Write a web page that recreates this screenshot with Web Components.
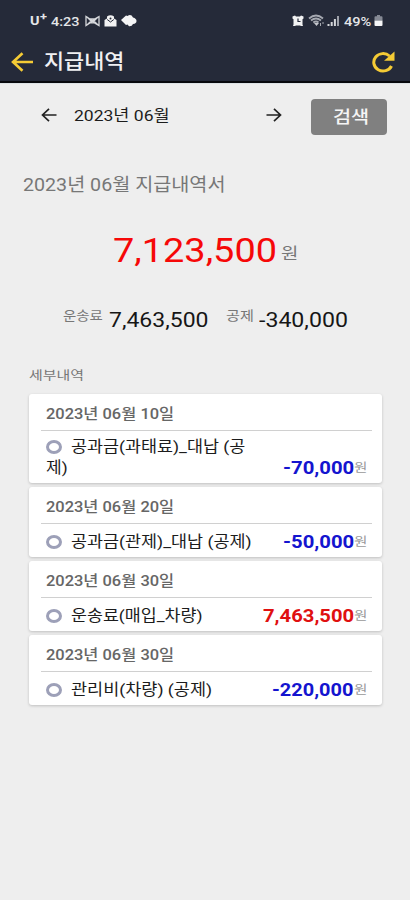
<!DOCTYPE html>
<html lang="ko">
<head>
<meta charset="utf-8">
<title>지급내역</title>
<style>
    body {
        margin: 0;
        background: #eee;
        font-family: Roboto, "Noto Sans CJK KR", sans-serif;
    }
</style>
</head>
<body>
<payment-page></payment-page>
<script>
// Text stretched horizontally to the width given in its attribute.
class WideText extends HTMLElement {
    constructor() {
        super();
        this.attachShadow({mode : "open"});
    }

    connectedCallback() {
        this.shadowRoot.innerHTML = `
            <style>
                :host { display: block; flex: none; white-space: nowrap; }
                span { display: inline-block; transform-origin: 0 50%; vertical-align: top; }
            </style>
            <span><slot></slot></span>
        `;
        this.style.width = this.getAttribute("width") + "px";
        const span = this.shadowRoot.querySelector("span");
        span.style.transform = `scaleX(${this.getAttribute("width") / span.offsetWidth})`;
    }
}

class StatusBar extends HTMLElement {
    constructor() {
        super();
        this.attachShadow({mode : "open"});
    }

    connectedCallback() {
        this.shadowRoot.innerHTML = `
            <style>
                :host {
                    display: flex;
                    align-items: center;
                    justify-content: space-between;
                    height: 41px;
                    padding: 0 27px 0 30px;
                    box-sizing: border-box;
                    color: #e4e5e8;
                    font-size: 13.5px;
                    font-weight: 500;
                    line-height: 20px;
                }
                div { display: flex; align-items: center; }
                svg { display: block; flex: none; }
                .carrier { font-weight: 700; font-size: 13px; }
                .plus { font-weight: 700; font-size: 11px; margin-top: -7px; }
            </style>
            <div>
                <wide-text class="carrier" width="10">U</wide-text>
                <wide-text class="plus" width="7">+</wide-text>
                <wide-text width="29" style="margin-left:4px">4:23</wide-text>
                <svg width="15" height="12" viewBox="0 0 15 12" style="margin-left:5px" fill="none" stroke="#d6d8dc" stroke-width="1.3"><path d="M1 1.500v9l4-2.600h4.500l4.500 2.600v-9L9.500 4H5ZM2 2l4 4-4 4M13 2 9 6l4 4M5.500 4l4 4M9.500 4l-4 4"/></svg>
                <svg width="13" height="12" viewBox="0 0 13 12" style="margin-left:4px"><path d="M.5 5 3 3.500V1.500Q6.500-.8 10 1.500v2L12.500 5v6.500H.5Z" fill="#f2f2f3"/><path d="M3.200 4.500 6.500 7l3.300-2.500" fill="none" stroke="#252a39" stroke-width="1"/><circle cx="6.500" cy="3.500" r="1" fill="#252a39"/></svg>
                <svg width="16" height="13" viewBox="0 0 16 13" style="margin-left:4px"><path d="M0 6 5 1.500 6.500 2Q10-.5 12 3.500q3.500 1 3.500 3.500 0 2.500-3.500 3-1 2.500-4 2.200L6.500 10.500 5 11Z" fill="#f4f4f5"/></svg>
            </div>
            <div>
                <svg width="12" height="12" viewBox="0 0 12 12"><path d="M.5 1.500 3 .5l1 1h4l1-1 2.500 1v2l-1 .800v5.200L11 11H9l-1-.5H4L3 11H1l.5-1.500V4.300L.5 3.500Z" fill="#f2f2f3"/><path d="M6 3.500v3h2.500" fill="none" stroke="#252a39" stroke-width="1.200"/></svg>
                <svg width="17" height="13" viewBox="0 0 17 13" style="margin-left:4px" fill="none"><path d="M1 4.500Q8-1.500 15 4.500M3 6.500q5-4 10 0M5.300 8.500Q8 6.500 10.500 8.500" stroke="#a6a9b1" stroke-width="1.800"/><path d="M6 9 8.500 12l2.500-3Z" fill="#c6c8cd"/><path d="M12.500 9v3M15 8v2" stroke="#a6a9b1"/></svg>
                <svg width="13" height="12" viewBox="0 0 13 12" style="margin-left:2px" stroke-width="2"><path d="M1.500 11V9M4.700 11V7M7.900 11V4" stroke="#d3d5d9"/><path d="M11 11V1" stroke="#9da0a9"/></svg>
                <wide-text width="27" style="margin-left:4px">49%</wide-text>
                <svg width="9" height="11" viewBox="0 0 9 11" style="margin-left:3px"><path d="M3 0h3v1.200h1.500q1 0 1 1v3.300H.5V2.200q0-1 1-1H3Z" fill="#858994"/><path d="M.5 5.500h8V10q0 1-1 1h-6q-1 0-1-1Z" fill="#f5f5f6"/></svg>
            </div>
        `;
    }
}

class TitleBar extends HTMLElement {
    constructor() {
        super();
        this.attachShadow({mode : "open"});
    }

    connectedCallback() {
        this.shadowRoot.innerHTML = `
            <style>
                :host {
                    display: flex;
                    align-items: center;
                    height: 41px;
                    padding: 0 15px 0 11px;
                    color: #f0f0f2;
                    font-size: 20.5px;
                    font-weight: 500;
                    line-height: 40px;
                }
                wide-text { margin-left: 10px; }
                .refresh { margin-left: auto; }
            </style>
            <svg width="23" height="20" viewBox="0 0 23 20" fill="none" stroke="#f5cb35" stroke-width="2.600"><path d="M22 10H2M11.500 1.200 2 10l9.500 8.800"/></svg>
            <wide-text width="80"><slot></slot></wide-text>
            <svg class="refresh" width="24" height="22" viewBox="0 0 24 22"><path d="M20.500 15A9.300 8.700 0 1 1 18.500 5" fill="none" stroke="#f5cb35" stroke-width="3"/><path d="M23.500.5v9.200H13Z" fill="#f5cb35"/></svg>
        `;
    }
}

class MonthPicker extends HTMLElement {
    constructor() {
        super();
        this.attachShadow({mode : "open"});
    }

    connectedCallback() {
        this.shadowRoot.innerHTML = `
            <style>
                :host {
                    display: flex;
                    align-items: center;
                    height: 36px;
                    padding: 15px 23px 0 41px;
                    color: #1c1c1c;
                    font-size: 15.5px;
                    line-height: 32px;
                }
                svg { fill: none; stroke: #222; stroke-width: 1.700; margin-bottom: 5px; }
                .month { margin: 0 96px 3px 17px; }
                button {
                    display: flex;
                    align-items: center;
                    justify-content: center;
                    width: 76px;
                    height: 36px;
                    margin-left: auto;
                    padding: 0;
                    border: 0;
                    border-radius: 4px;
                    background: #808080;
                    color: #f5f5f5;
                    font: 500 17.5px/36px Roboto, "Noto Sans CJK KR", sans-serif;
                }
            </style>
            <svg width="16" height="14" viewBox="0 0 16 14"><path d="M15.500 7H1.500M8 .8 1.500 7 8 13.200"/></svg>
            <wide-text class="month" width="96"><slot></slot></wide-text>
            <svg width="16" height="14" viewBox="0 0 16 14"><path d="M.5 7h14M8 .8 14.500 7 8 13.200"/></svg>
            <button><wide-text width="36">검색</wide-text></button>
        `;
    }
}

class PaySummary extends HTMLElement {
    constructor() {
        super();
        this.attachShadow({mode : "open"});
    }

    connectedCallback() {
        this.shadowRoot.innerHTML = `
            <style>
                :host { display: block; color: #777; }
                .heading { margin: 35px 0 0 23px; font-size: 18px; line-height: 30px; }
                .total { display: flex; margin: 28px 0 0 113px; height: 44px; }
                .total .value { color: #f60808; font-size: 33.500px; line-height: 45px; }
                .total .won { margin-left: 4px; font-size: 15.500px; line-height: 53px; }
                .parts { display: flex; margin: 33px 0 0 63px; height: 30px; }
                .parts .label { font-size: 13px; line-height: 22px; }
                .parts .value { color: #161616; font-size: 20px; line-height: 31px; margin-left: 6px; }
                .details { margin: 30px 0 0 29px; font-size: 12.500px; line-height: 21px; }
            </style>
            <wide-text class="heading" width="203">2023년 06월 지급내역서</wide-text>
            <div class="total">
                <wide-text class="value" width="164">7,123,500</wide-text>
                <wide-text class="won" width="17">원</wide-text>
            </div>
            <div class="parts">
                <wide-text class="label" width="40">운송료</wide-text>
                <wide-text class="value" width="100">7,463,500</wide-text>
                <wide-text class="label" width="28" style="margin-left:17px">공제</wide-text>
                <wide-text class="value" width="89" style="margin-left:5px">-340,000</wide-text>
            </div>
            <wide-text class="details" width="55">세부내역</wide-text>
        `;
    }
}

class PayCard extends HTMLElement {
    constructor() {
        super();
        this.attachShadow({mode : "open"});
    }

    connectedCallback() {
        const color = this.getAttribute("amount").startsWith("-") ? "#1414cf" : "#e01010";

        this.shadowRoot.innerHTML = `
            <style>
                :host {
                    display: block;
                    box-sizing: border-box;
                    min-height: 70px;
                    padding: 5px 10px 4px 12px;
                    border-radius: 3px;
                    background: #fff;
                    box-shadow: 0 1px 3px #0003;
                }
                .date {
                    padding: 0 0 0 5px;
                    height: 31px;
                    border-bottom: 1px solid #d0d0d0;
                    color: #666;
                    font-size: 14.500px;
                    font-weight: 500;
                    line-height: 32px;
                }
                .row { display: flex; align-items: flex-end; padding: 6px 4px 0 5px; }
                .name { color: #1c1c1c; font-size: 15.500px; line-height: 21px; }
                .line { display: flex; align-items: center; }
                i {
                    box-sizing: border-box;
                    width: 16px;
                    height: 14px;
                    margin: 0 9px 2px 0;
                    border: 3px solid #9da0b8;
                    border-radius: 50%;
                }
                .value { margin-left: auto; color: ${color}; font-size: 18px; font-weight: 700; line-height: 22px; }
                .won { color: #999; font-size: 12.500px; line-height: 23px; }
            </style>
            <div class="date"><wide-text width="128">${this.getAttribute("date")}</wide-text></div>
            <div class="row">
                <div class="name">
                    <div class="line"><i></i><slot></slot></div>
                    <slot name="more"></slot>
                </div>
                <wide-text class="value" width="${this.getAttribute("amount-width")}">${this.getAttribute("amount")}</wide-text>
                <wide-text class="won" width="14">원</wide-text>
            </div>
        `;
    }
}

class PaymentPage extends HTMLElement {
    constructor() {
        super();
        this.attachShadow({mode : "open"});
    }

    connectedCallback() {
        this.shadowRoot.innerHTML = `
            <style>
                :host { display: block; height: 900px; overflow: hidden; }
                header { height: 83px; box-sizing: border-box; background: #252a39; border-bottom: 2px solid #08090d; }
                main { border-top: 1px solid #dde2e4; }
                .list { display: flex; flex-direction: column; gap: 4px; padding: 8px 28px 0 29px; }
            </style>
            <header>
                <status-bar></status-bar>
                <title-bar>지급내역</title-bar>
            </header>
            <main>
                <month-picker>2023년 06월</month-picker>
                <pay-summary></pay-summary>
                <div class="list">
                    <pay-card date="2023년 06월 10일" amount="-70,000" amount-width="71">
                        <wide-text width="174">공과금(과태료)_대납 (공</wide-text>
                        <wide-text slot="more" width="22">제)</wide-text>
                    </pay-card>
                    <pay-card date="2023년 06월 20일" amount="-50,000" amount-width="71">
                        <wide-text width="181">공과금(관제)_대납 (공제)</wide-text>
                    </pay-card>
                    <pay-card date="2023년 06월 30일" amount="7,463,500" amount-width="91">
                        <wide-text width="132">운송료(매입_차량)</wide-text>
                    </pay-card>
                    <pay-card date="2023년 06월 30일" amount="-220,000" amount-width="82">
                        <wide-text width="141">관리비(차량) (공제)</wide-text>
                    </pay-card>
                </div>
            </main>
        `;
    }
}

customElements.define("wide-text", WideText);
customElements.define("status-bar", StatusBar);
customElements.define("title-bar", TitleBar);
customElements.define("month-picker", MonthPicker);
customElements.define("pay-summary", PaySummary);
customElements.define("pay-card", PayCard);
customElements.define("payment-page", PaymentPage);
</script>
</body>
</html>
